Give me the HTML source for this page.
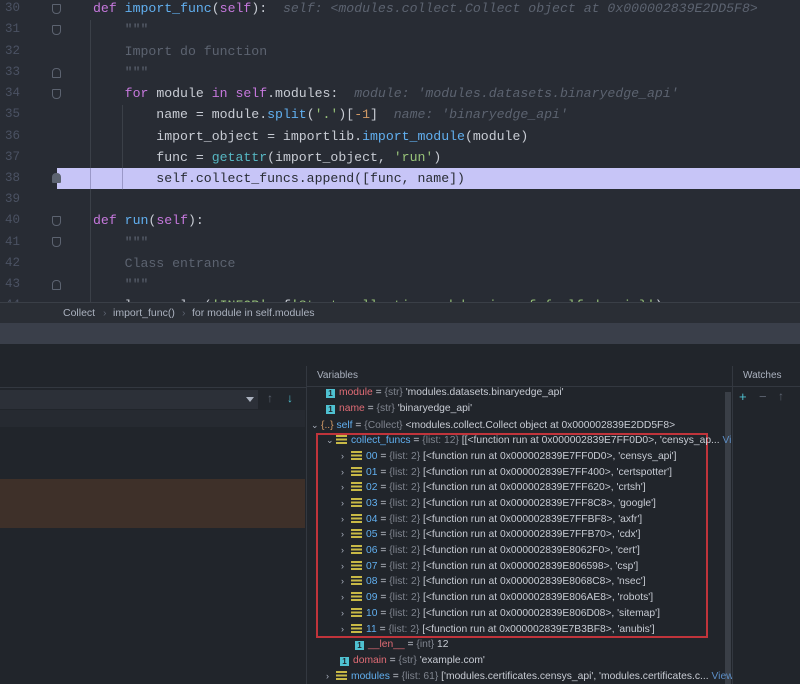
<!DOCTYPE html>
<html><head><meta charset="utf-8"><style>
*{margin:0;padding:0;box-sizing:border-box}
body{width:800px;height:684px;overflow:hidden;background:#21252b;position:relative;font-family:"Liberation Sans",sans-serif}
.ed{position:absolute;left:0;top:0;width:800px;height:302px;background:#282c34;overflow:hidden}
.ln{position:absolute;left:0;width:800px;height:21px;font-family:"Liberation Mono",monospace;font-size:13.2px;line-height:21px;white-space:pre;color:#c8ccd4}
.ln .n{position:absolute;left:5px;color:#4b5263;font-size:12.5px}
.ln .c{position:absolute;left:93px}
.hl{background:#c7c5f7}
.hl .c{color:#282c34}
.k{color:#c678dd}.f{color:#61afef}.s{color:#98c379}.g{color:#5c6370}.h{color:#5c6370;font-style:italic}.o{color:#d19a66}.t{color:#56b6c2}
.fold{position:absolute;left:52px;width:9px;height:10px;border:1px solid #5c6370;border-radius:1px 1px 4px 4px}
.fold.u{border-radius:4px 4px 1px 1px}
.guide{position:absolute;width:1px;background:#3b4048}
.bc{position:absolute;left:0;top:302px;width:800px;height:21px;background:#2a2e35;border-top:1px solid #3a3f47;font-size:10.5px;color:#abb2bf;line-height:20px}
.gb{position:absolute;left:0;top:323px;width:800px;height:21px;background:#3a3f4a}
.vp{position:absolute;left:306px;top:366px;width:426px;height:318px;background:#21252b;border-left:1px solid #333840}
.wp{position:absolute;left:732px;top:366px;width:68px;height:318px;border-left:1px solid #333840}
.vr{position:absolute;font-size:10.3px;white-space:nowrap;color:#c8ccd4;height:16px;line-height:16px}
.r{color:#e06c75}.b{color:#61afef}.gr{color:#7f848e}
.ic1{display:inline-block;width:9px;height:9px;background:#4fc1d1;color:#21252b;font-size:8px;line-height:9px;text-align:center;font-weight:bold;vertical-align:-1px;margin-right:4px}
.lst{display:inline-block;width:11px;height:9px;margin-right:4px;vertical-align:-1px;background:linear-gradient(#c8b946 0 2px,transparent 2px 3.5px,#c8b946 3.5px 5.5px,transparent 5.5px 7px,#c8b946 7px 9px);}
.ar{display:inline-block;width:10px;color:#abb2bf;font-size:9px}
</style></head><body>
<div class="ed">
<div class="guide" style="left:90px;top:20px;height:282px"></div>
<div class="guide" style="left:122px;top:105px;height:85px"></div>
<div class="ln" style="top:-2px"><span class="n">30</span><span class="c"><span class="k">def</span> <span class="f">import_func</span>(<span class="k">self</span>):  <span class="h">self: &lt;modules.collect.Collect object at 0x000002839E2DD5F8&gt;</span></span></div>
<div class="ln" style="top:19px"><span class="n">31</span><span class="c">    <span class="g">"""</span></span></div>
<div class="ln" style="top:41px"><span class="n">32</span><span class="c">    <span class="g">Import do function</span></span></div>
<div class="ln" style="top:62px"><span class="n">33</span><span class="c">    <span class="g">"""</span></span></div>
<div class="ln" style="top:83px"><span class="n">34</span><span class="c">    <span class="k">for</span> module <span class="k">in</span> <span class="k">self</span>.modules:  <span class="h">module: 'modules.datasets.binaryedge_api'</span></span></div>
<div class="ln" style="top:104px"><span class="n">35</span><span class="c">        name = module.<span class="f">split</span>(<span class="s">'.'</span>)[<span class="o">-1</span>]  <span class="h">name: 'binaryedge_api'</span></span></div>
<div class="ln" style="top:126px"><span class="n">36</span><span class="c">        import_object = importlib.<span class="f">import_module</span>(module)</span></div>
<div class="ln" style="top:147px"><span class="n">37</span><span class="c">        func = <span class="t">getattr</span>(import_object, <span class="s">'run'</span>)</span></div>
<div class="ln hl" style="top:168px;left:57px;width:743px"><span class="c" style="left:36px">        self.collect_funcs.append([func, name])</span></div>
<div class="ln" style="top:168px;width:57px"><span class="n">38</span></div>
<div class="guide" style="left:90px;top:168px;height:21px;background:#9a98c8"></div>
<div class="guide" style="left:122px;top:168px;height:21px;background:#9a98c8"></div>
<div class="ln" style="top:189px"><span class="n">39</span></div>
<div class="ln" style="top:210px"><span class="n">40</span><span class="c"><span class="k">def</span> <span class="f">run</span>(<span class="k">self</span>):</span></div>
<div class="ln" style="top:232px"><span class="n">41</span><span class="c">    <span class="g">"""</span></span></div>
<div class="ln" style="top:253px"><span class="n">42</span><span class="c">    <span class="g">Class entrance</span></span></div>
<div class="ln" style="top:274px"><span class="n">43</span><span class="c">    <span class="g">"""</span></span></div>
<div class="ln" style="top:295px"><span class="n">44</span><span class="c">    logger.log(<span class="s">'INFOR'</span>, f<span class="s">'Start collecting subdomains of {self.domain}'</span>)</span></div>
<div class="fold" style="top:4px"></div><div class="fold" style="top:25px"></div><div class="fold u" style="top:68px"></div><div class="fold" style="top:89px"></div><div class="fold u" style="top:173px;background:#5c6370"></div><div class="fold" style="top:216px"></div><div class="fold" style="top:237px"></div><div class="fold u" style="top:280px"></div>
</div>
<div class="bc"><span style="position:absolute;left:63px">Collect</span><span style="position:absolute;left:103px;color:#5c6370">›</span><span style="position:absolute;left:113px">import_func()</span><span style="position:absolute;left:182px;color:#5c6370">›</span><span style="position:absolute;left:192px">for module in self.modules</span></div>
<div class="gb"></div>
<div style="position:absolute;left:0;top:366px;width:306px;height:22px;border-bottom:1px solid #333840"></div>
<div style="position:absolute;left:0;top:390px;width:258px;height:19px;background:#2c3038"></div>
<div style="position:absolute;left:246px;top:397px;width:0;height:0;border-left:4px solid transparent;border-right:4px solid transparent;border-top:5px solid #abb2bf"></div>
<div style="position:absolute;left:267px;top:391px;color:#5c6370;font-size:12px">↑</div>
<div style="position:absolute;left:287px;top:391px;color:#4fc1d1;font-size:12px">↓</div>
<div style="position:absolute;left:0;top:410px;width:305px;height:17px;background:#262a31"></div>
<div style="position:absolute;left:0;top:479px;width:305px;height:49px;background:#3e3029"></div>
<div class="vp">
<div style="position:absolute;left:10px;top:4px;font-size:10px;color:#abb2bf">Variables</div>
<div style="position:absolute;left:0;top:20px;width:426px;height:1px;background:#333840"></div>
<div style="position:absolute;left:418px;top:26px;width:6px;height:292px;background:#3a3f47"></div>
</div>
<div class="wp"><div style="position:absolute;left:10px;top:4px;font-size:10px;color:#abb2bf">Watches</div>
<div style="position:absolute;left:0;top:20px;width:68px;height:1px;background:#333840"></div>
<div style="position:absolute;left:6px;top:23px;font-size:13px;color:#4fc1d1">+</div><div style="position:absolute;left:26px;top:23px;font-size:13px;color:#5c6370">−</div><div style="position:absolute;left:45px;top:23px;font-size:12px;color:#5c6370">↑</div></div>
<div style="position:absolute;left:316px;top:433px;width:392px;height:205px;border:2px solid #c0343b"></div>
<div class="vr" style="left:326px;top:385px"><span class="ic1">1</span><span class="r">module</span> = <span class="gr">{str}</span> 'modules.datasets.binaryedge_api'</div>
<div class="vr" style="left:326px;top:401px"><span class="ic1">1</span><span class="r">name</span> = <span class="gr">{str}</span> 'binaryedge_api'</div>
<div class="vr" style="left:311px;top:417px"><span class="ar">⌄</span><span style="color:#d19a66">{..}</span> <span class="b">self</span> = <span class="gr">{Collect}</span> &lt;modules.collect.Collect object at 0x000002839E2DD5F8&gt;</div>
<div class="vr" style="left:326px;top:432px;width:406px;overflow:hidden"><span class="ar">⌄</span><span class="lst"></span><span class="b">collect_funcs</span> = <span class="gr">{list: 12}</span> [[&lt;function run at 0x000002839E7FF0D0&gt;, 'censys_ap... <span style="color:#5d8fc7">View</span></div>
<div class="vr" style="left:341px;top:448px"><span class="ar">›</span><span class="lst"></span><span class="b">00</span> = <span class="gr">{list: 2}</span> [&lt;function run at 0x000002839E7FF0D0&gt;, 'censys_api']</div>
<div class="vr" style="left:341px;top:464px"><span class="ar">›</span><span class="lst"></span><span class="b">01</span> = <span class="gr">{list: 2}</span> [&lt;function run at 0x000002839E7FF400&gt;, 'certspotter']</div>
<div class="vr" style="left:341px;top:479px"><span class="ar">›</span><span class="lst"></span><span class="b">02</span> = <span class="gr">{list: 2}</span> [&lt;function run at 0x000002839E7FF620&gt;, 'crtsh']</div>
<div class="vr" style="left:341px;top:495px"><span class="ar">›</span><span class="lst"></span><span class="b">03</span> = <span class="gr">{list: 2}</span> [&lt;function run at 0x000002839E7FF8C8&gt;, 'google']</div>
<div class="vr" style="left:341px;top:511px"><span class="ar">›</span><span class="lst"></span><span class="b">04</span> = <span class="gr">{list: 2}</span> [&lt;function run at 0x000002839E7FFBF8&gt;, 'axfr']</div>
<div class="vr" style="left:341px;top:526px"><span class="ar">›</span><span class="lst"></span><span class="b">05</span> = <span class="gr">{list: 2}</span> [&lt;function run at 0x000002839E7FFB70&gt;, 'cdx']</div>
<div class="vr" style="left:341px;top:542px"><span class="ar">›</span><span class="lst"></span><span class="b">06</span> = <span class="gr">{list: 2}</span> [&lt;function run at 0x000002839E8062F0&gt;, 'cert']</div>
<div class="vr" style="left:341px;top:558px"><span class="ar">›</span><span class="lst"></span><span class="b">07</span> = <span class="gr">{list: 2}</span> [&lt;function run at 0x000002839E806598&gt;, 'csp']</div>
<div class="vr" style="left:341px;top:573px"><span class="ar">›</span><span class="lst"></span><span class="b">08</span> = <span class="gr">{list: 2}</span> [&lt;function run at 0x000002839E8068C8&gt;, 'nsec']</div>
<div class="vr" style="left:341px;top:589px"><span class="ar">›</span><span class="lst"></span><span class="b">09</span> = <span class="gr">{list: 2}</span> [&lt;function run at 0x000002839E806AE8&gt;, 'robots']</div>
<div class="vr" style="left:341px;top:605px"><span class="ar">›</span><span class="lst"></span><span class="b">10</span> = <span class="gr">{list: 2}</span> [&lt;function run at 0x000002839E806D08&gt;, 'sitemap']</div>
<div class="vr" style="left:341px;top:621px"><span class="ar">›</span><span class="lst"></span><span class="b">11</span> = <span class="gr">{list: 2}</span> [&lt;function run at 0x000002839E7B3BF8&gt;, 'anubis']</div>
<div class="vr" style="left:355px;top:637px"><span class="ic1">1</span><span class="r">__len__</span> = <span class="gr">{int}</span> 12</div>
<div class="vr" style="left:340px;top:653px"><span class="ic1">1</span><span class="r">domain</span> = <span class="gr">{str}</span> 'example.com'</div>
<div class="vr" style="left:326px;top:668px;width:406px;overflow:hidden"><span class="ar">›</span><span class="lst"></span><span class="b">modules</span> = <span class="gr">{list: 61}</span> ['modules.certificates.censys_api', 'modules.certificates.c... <span style="color:#5d8fc7">View</span></div>
</body></html>
